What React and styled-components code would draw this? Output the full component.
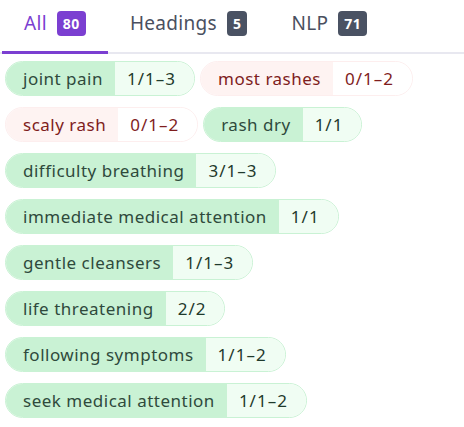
import React, {useState} from "react";
import styled, {createGlobalStyle} from "styled-components";

const GlobalStyle = createGlobalStyle`
    body {
        margin: 0;
        background: #ffffff;
        font-family: "Noto Sans", "Open Sans", sans-serif;
    }
`;

const tabs = [
    {id: "all", label: "All", count: 80},
    {id: "headings", label: "Headings", count: 5},
    {id: "nlp", label: "NLP", count: 71},
];

// 각 키워드: 이름, 점수, 일치 여부
const keywords = [
    {name: "joint pain", score: "1/1–3", ok: true},
    {name: "most rashes", score: "0/1–2", ok: false},
    {name: "scaly rash", score: "0/1–2", ok: false},
    {name: "rash dry", score: "1/1", ok: true},
    {name: "difficulty breathing", score: "3/1–3", ok: true},
    {name: "immediate medical attention", score: "1/1", ok: true},
    {name: "gentle cleansers", score: "1/1–3", ok: true},
    {name: "life threatening", score: "2/2", ok: true},
    {name: "following symptoms", score: "1/1–2", ok: true},
    {name: "seek medical attention", score: "1/1–2", ok: true},
];

const App = () => {
    const [active, setActive] = useState("all");

    return (
        <Panel>
            <GlobalStyle/>
            <TabBar>
                {tabs.map((tab) => (
                    <Tab key={tab.id} $active={active === tab.id} onClick={() => setActive(tab.id)}>
                        {tab.label}
                        <Count $active={active === tab.id}>{tab.count}</Count>
                    </Tab>
                ))}
            </TabBar>
            <ChipList>
                {keywords.map((k) => (
                    <Chip key={k.name} $ok={k.ok}>
                        <ChipLabel $ok={k.ok}>{k.name}</ChipLabel>
                        <ChipScore $ok={k.ok}>{k.score}</ChipScore>
                    </Chip>
                ))}
            </ChipList>
        </Panel>
    );
};

export default App;

const Panel = styled.div`
    width: 464px;
`;

const TabBar = styled.div`
    display: flex;
    padding-left: 2px;
    border-bottom: 2px solid #e8e8f0;
`;

const Tab = styled.div`
    display: flex;
    align-items: center;
    gap: 10px;
    height: 54px;
    padding: 0 22px 5px;
    margin-bottom: -2px;
    box-sizing: border-box;
    border-bottom: 3px solid ${(p) => (p.$active ? "#7b3fd1" : "transparent")};
    color: ${(p) => (p.$active ? "#7b3fd1" : "#4a5060")};
    font-size: 19px;
    letter-spacing: 0.3px;
    cursor: pointer;
`;

const Count = styled.span`
    display: inline-flex;
    align-items: center;
    justify-content: center;
    min-width: 20px;
    height: 25px;
    padding: 0 6px;
    box-sizing: border-box;
    border-radius: 4px;
    background: ${(p) => (p.$active ? "#7b3fd1" : "#4a5263")};
    color: #ffffff;
    font-size: 14px;
    font-weight: 700;
    letter-spacing: 0.5px;
`;

const ChipList = styled.div`
    display: flex;
    flex-wrap: wrap;
    gap: 11px 5px;
    padding: 7px 5px;
`;

const Chip = styled.div`
    display: flex;
    height: 35px;
    box-sizing: border-box;
    border: 1px solid ${(p) => (p.$ok ? "#c9f2d4" : "#fdeeee")};
    border-radius: 18px;
    overflow: hidden;
    font-size: 17px;
    letter-spacing: 0.5px;
`;

const ChipLabel = styled.span`
    display: flex;
    align-items: center;
    padding: 0 12px 0 17px;
    background: ${(p) => (p.$ok ? "#c9f2d4" : "#fef3f2")};
    color: ${(p) => (p.$ok ? "#2f4a3c" : "#7f1d1d")};
`;

const ChipScore = styled.span`
    display: flex;
    align-items: center;
    padding: 0 18px 0 12px;
    background: ${(p) => (p.$ok ? "#f0fdf3" : "#ffffff")};
    color: ${(p) => (p.$ok ? "#1f3a2c" : "#7f1d1d")};
    letter-spacing: 1px;
`;
